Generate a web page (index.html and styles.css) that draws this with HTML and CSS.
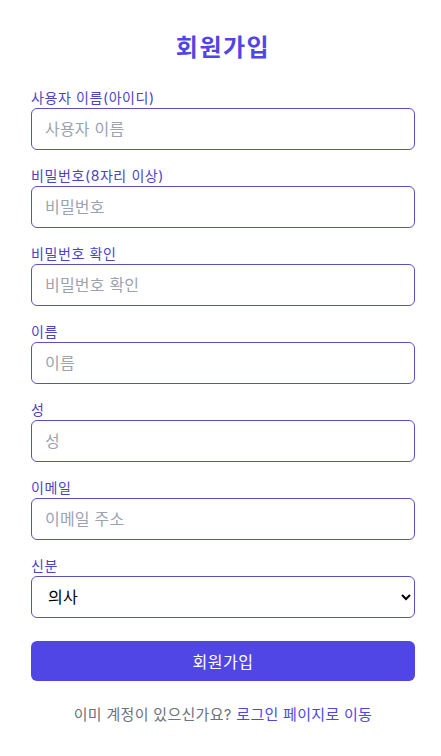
FILE: index.html
```html
<!DOCTYPE html>
<html lang="ko">
<head>
<meta charset="utf-8">
<title>회원가입</title>
<link rel="stylesheet" href="styles.css">
</head>
<body>
<div class="card">
  <h1 class="title">회원가입</h1>
  <form class="form">
    <div class="field">
      <label class="label">사용자 이름(아이디)</label>
      <input class="input" type="text" placeholder="사용자 이름">
    </div>
    <div class="field">
      <label class="label">비밀번호(8자리 이상)</label>
      <input class="input" type="password" placeholder="비밀번호">
    </div>
    <div class="field">
      <label class="label">비밀번호 확인</label>
      <input class="input" type="password" placeholder="비밀번호 확인">
    </div>
    <div class="field">
      <label class="label">이름</label>
      <input class="input" type="text" placeholder="이름">
    </div>
    <div class="field">
      <label class="label">성</label>
      <input class="input" type="text" placeholder="성">
    </div>
    <div class="field">
      <label class="label">이메일</label>
      <input class="input" type="email" placeholder="이메일 주소">
    </div>
    <div class="field">
      <label class="label">신분</label>
      <select class="input select">
        <option>의사</option>
        <option>간호사</option>
      </select>
    </div>
    <button class="btn" type="button">회원가입</button>
  </form>
  <p class="footer">이미 계정이 있으신가요? <a class="link" href="#">로그인 페이지로 이동</a></p>
</div>
</body>
</html>
```
FILE: styles.css
```css
* { box-sizing: border-box; }
html, body { margin: 0; padding: 0; background: #ffffff; }
body {
  font-family: Inter, "Noto Sans CJK KR", sans-serif;
  color: #111827;
}
.card {
  width: 441px;
  padding: 32px 26px 0 31px;
}
.title {
  margin: 0 0 24px 0;
  font-size: 24px;
  line-height: 32px;
  font-weight: 700;
  letter-spacing: 1.5px;
  text-align: center;
  color: #4f46e5;
}
.form {
  display: flex;
  flex-direction: column;
  gap: 16px;
}
.field {
  display: flex;
  flex-direction: column;
}
.label {
  font-size: 14px;
  line-height: 20px;
  letter-spacing: 0.6px;
  color: #4a43c9;
}
.input {
  width: 384px;
  height: 42px;
  border: 1px solid #5b4fc9;
  border-radius: 6px;
  padding: 0 13px;
  font-family: inherit;
  font-size: 16px;
  letter-spacing: 0.2px;
  color: #111827;
  background: #ffffff;
  outline: none;
}
.input::placeholder { color: #9ca3af; }
.select {
  padding: 0 8px 0 12px;
  color: #000000;
}
.btn {
  margin-top: 7px;
  width: 384px;
  height: 40px;
  border: none;
  border-radius: 6px;
  background: #4f46e5;
  color: #ffffff;
  font-family: inherit;
  font-size: 16px;
  letter-spacing: 0.5px;
}
.footer {
  margin: 24px 0 0 0;
  font-size: 15px;
  line-height: 20px;
  letter-spacing: 0.3px;
  text-align: center;
  color: #6b7280;
}
.link {
  color: #4f46e5;
  text-decoration: none;
}
```
